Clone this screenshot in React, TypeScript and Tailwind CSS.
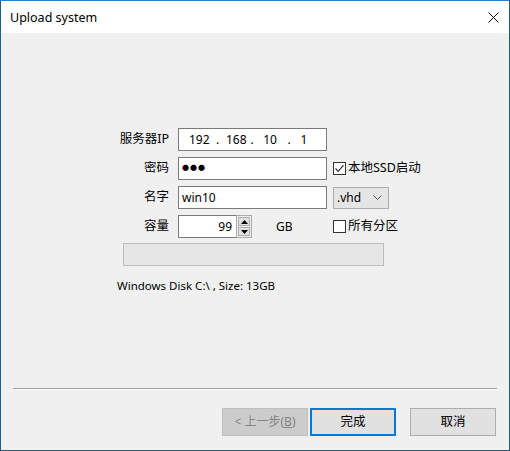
import React from 'react';

const font = 'font-[Noto_Sans,Noto_Sans_CJK_SC,sans-serif]';

function Checkbox({ checked, label }: { checked?: boolean; label: React.ReactNode }) {
	return (
		<div className="flex items-center gap-[2px] h-full">
			<span className="w-[13px] h-[13px] border border-[#333333] bg-white flex items-center justify-center">
				{checked && (
					<svg width="11" height="11" viewBox="0 0 11 11">
						<path d="M1.5 5.5 L4.2 8.3 L9.5 2.2" fill="none" stroke="#333333" strokeWidth="1.2" />
					</svg>
				)}
			</span>
			<span className="text-[12.5px] text-black leading-none">{label}</span>
		</div>
	);
}

function SpinBox() {
	return (
		<div className="flex h-full">
			<div className="w-[58px] h-full border border-[#7a7a7a] border-r-0 bg-white flex items-center justify-end pr-[4px] text-[12px]">
				99
			</div>
			<div className="w-[16px] h-full flex flex-col gap-[1px] border border-[#ababab] bg-[#f0f0f0] p-[1px]">
				{[0, 1].map((i) => (
					<div
						key={i}
						className="flex-1 bg-[#e1e1e1] border border-[#adadad] flex items-center justify-center"
					>
						<svg width="7" height="4" viewBox="0 0 7 4">
							<path d={i === 0 ? 'M0 4 L3.5 0 L7 4 Z' : 'M0 0 L3.5 4 L7 0 Z'} fill="#000" />
						</svg>
					</div>
				))}
			</div>
		</div>
	);
}

export default function App() {
	// widths of the ip box parts, each centred
	const ipParts: [string, string][] = [
		['', 'w-[10px]'],
		['192', 'w-[20px]'],
		['.', 'w-[17px]'],
		['168', 'w-[20px]'],
		['.', 'w-[12px]'],
		['10', 'w-[24px]'],
		['.', 'w-[14px]'],
		['1', 'w-[16px]'],
	];

	const rows: { label: string; field: React.ReactNode; side?: React.ReactNode }[] = [
		{
			label: '服务器IP',
			field: (
				<div className="h-full border border-[#7a7a7a] bg-white flex items-center text-[12px]">
					{ipParts.map(([t, w], i) => (
						<span key={i} className={`${w} shrink-0 text-center`}>
							{t}
						</span>
					))}
				</div>
			),
		},
		{
			label: '密码',
			field: (
				<div className="h-full border border-[#7a7a7a] bg-white flex items-center pl-[3px] text-[7px] tracking-[1px]">
					●●●
				</div>
			),
			side: <Checkbox checked label="本地SSD启动" />,
		},
		{
			label: '名字',
			field: (
				<div className="h-full border border-[#7a7a7a] bg-white flex items-center pl-[3px] text-[12px]">
					win10
				</div>
			),
			side: (
				<div className="w-[56px] h-[22px] border border-[#adadad] bg-[#e5e5e5] flex items-center justify-between pl-[3px] pr-[6px] text-[12px]">
					<span>.vhd</span>
					<svg width="9" height="5" viewBox="0 0 9 5">
						<path d="M0.5 0.5 L4.5 4.5 L8.5 0.5" fill="none" stroke="#555" strokeWidth="1" />
					</svg>
				</div>
			),
		},
		{
			label: '容量',
			field: (
				<div className="h-full flex items-center">
					<SpinBox />
					<span className="ml-[24px] text-[12px]">GB</span>
				</div>
			),
			side: <Checkbox label="所有分区" />,
		},
	];

	return (
		<div className={`${font} w-[510px] h-[451px] border border-[#1c5f86] border-t-[#2a7fcf] flex flex-col text-black`}>
			{/* Title bar */}
			<div className="h-[32px] bg-white flex items-center justify-between pl-[9px] pr-[10px]">
				<span className="text-[12.5px] mt-[2px]">Upload system</span>
				<svg width="11" height="11" viewBox="0 0 11 11" className="mt-[1px]">
					<path d="M0.5 0.5 L10.5 10.5 M10.5 0.5 L0.5 10.5" stroke="#000" strokeWidth="1" />
				</svg>
			</div>

			{/* Body */}
			<div className="flex-1 bg-[#f0f0f0] flex flex-col">
				<div className="mt-[95px] pl-[110px] grid grid-cols-[60px_150px_auto] gap-x-[6px] gap-y-[6px]">
					{rows.map((row) => (
						<React.Fragment key={row.label}>
							<div className="h-[23px] flex items-center justify-end pr-[2px] text-[12.5px]">
								{row.label}
							</div>
							<div className="h-[23px] ml-[1px]">{row.field}</div>
							<div className="h-[23px] flex items-center">{row.side}</div>
						</React.Fragment>
					))}
				</div>

				<div className="mt-[5px] ml-[122px] w-[261px] h-[23px] border border-[#bcbcbc] bg-[#e6e6e6]" />

				<div className="mt-[13px] ml-[116px] text-[11.5px] leading-[14px]">
					Windows Disk C:\ , Size: 13GB
				</div>

				<div className="mt-[95px] mx-[12px] border-t border-t-[#a0a0a0] border-b border-b-white" />

				<div className="mt-[18px] flex justify-end pr-[13px] gap-[2px]">
					<button className="w-[86px] h-[28px] bg-[#cccccc] border border-[#bfbfbf] text-[#838383] text-[12px]">
						&lt; 上一步(<span className="underline">B</span>)
					</button>
					<button className="w-[86px] h-[28px] bg-[#e1e1e1] border-2 border-[#0078d7] text-[12.5px]">
						完成
					</button>
					<button className="ml-[12px] w-[86px] h-[28px] bg-[#e1e1e1] border border-[#adadad] text-[12.5px]">
						取消
					</button>
				</div>
			</div>
		</div>
	);
}
